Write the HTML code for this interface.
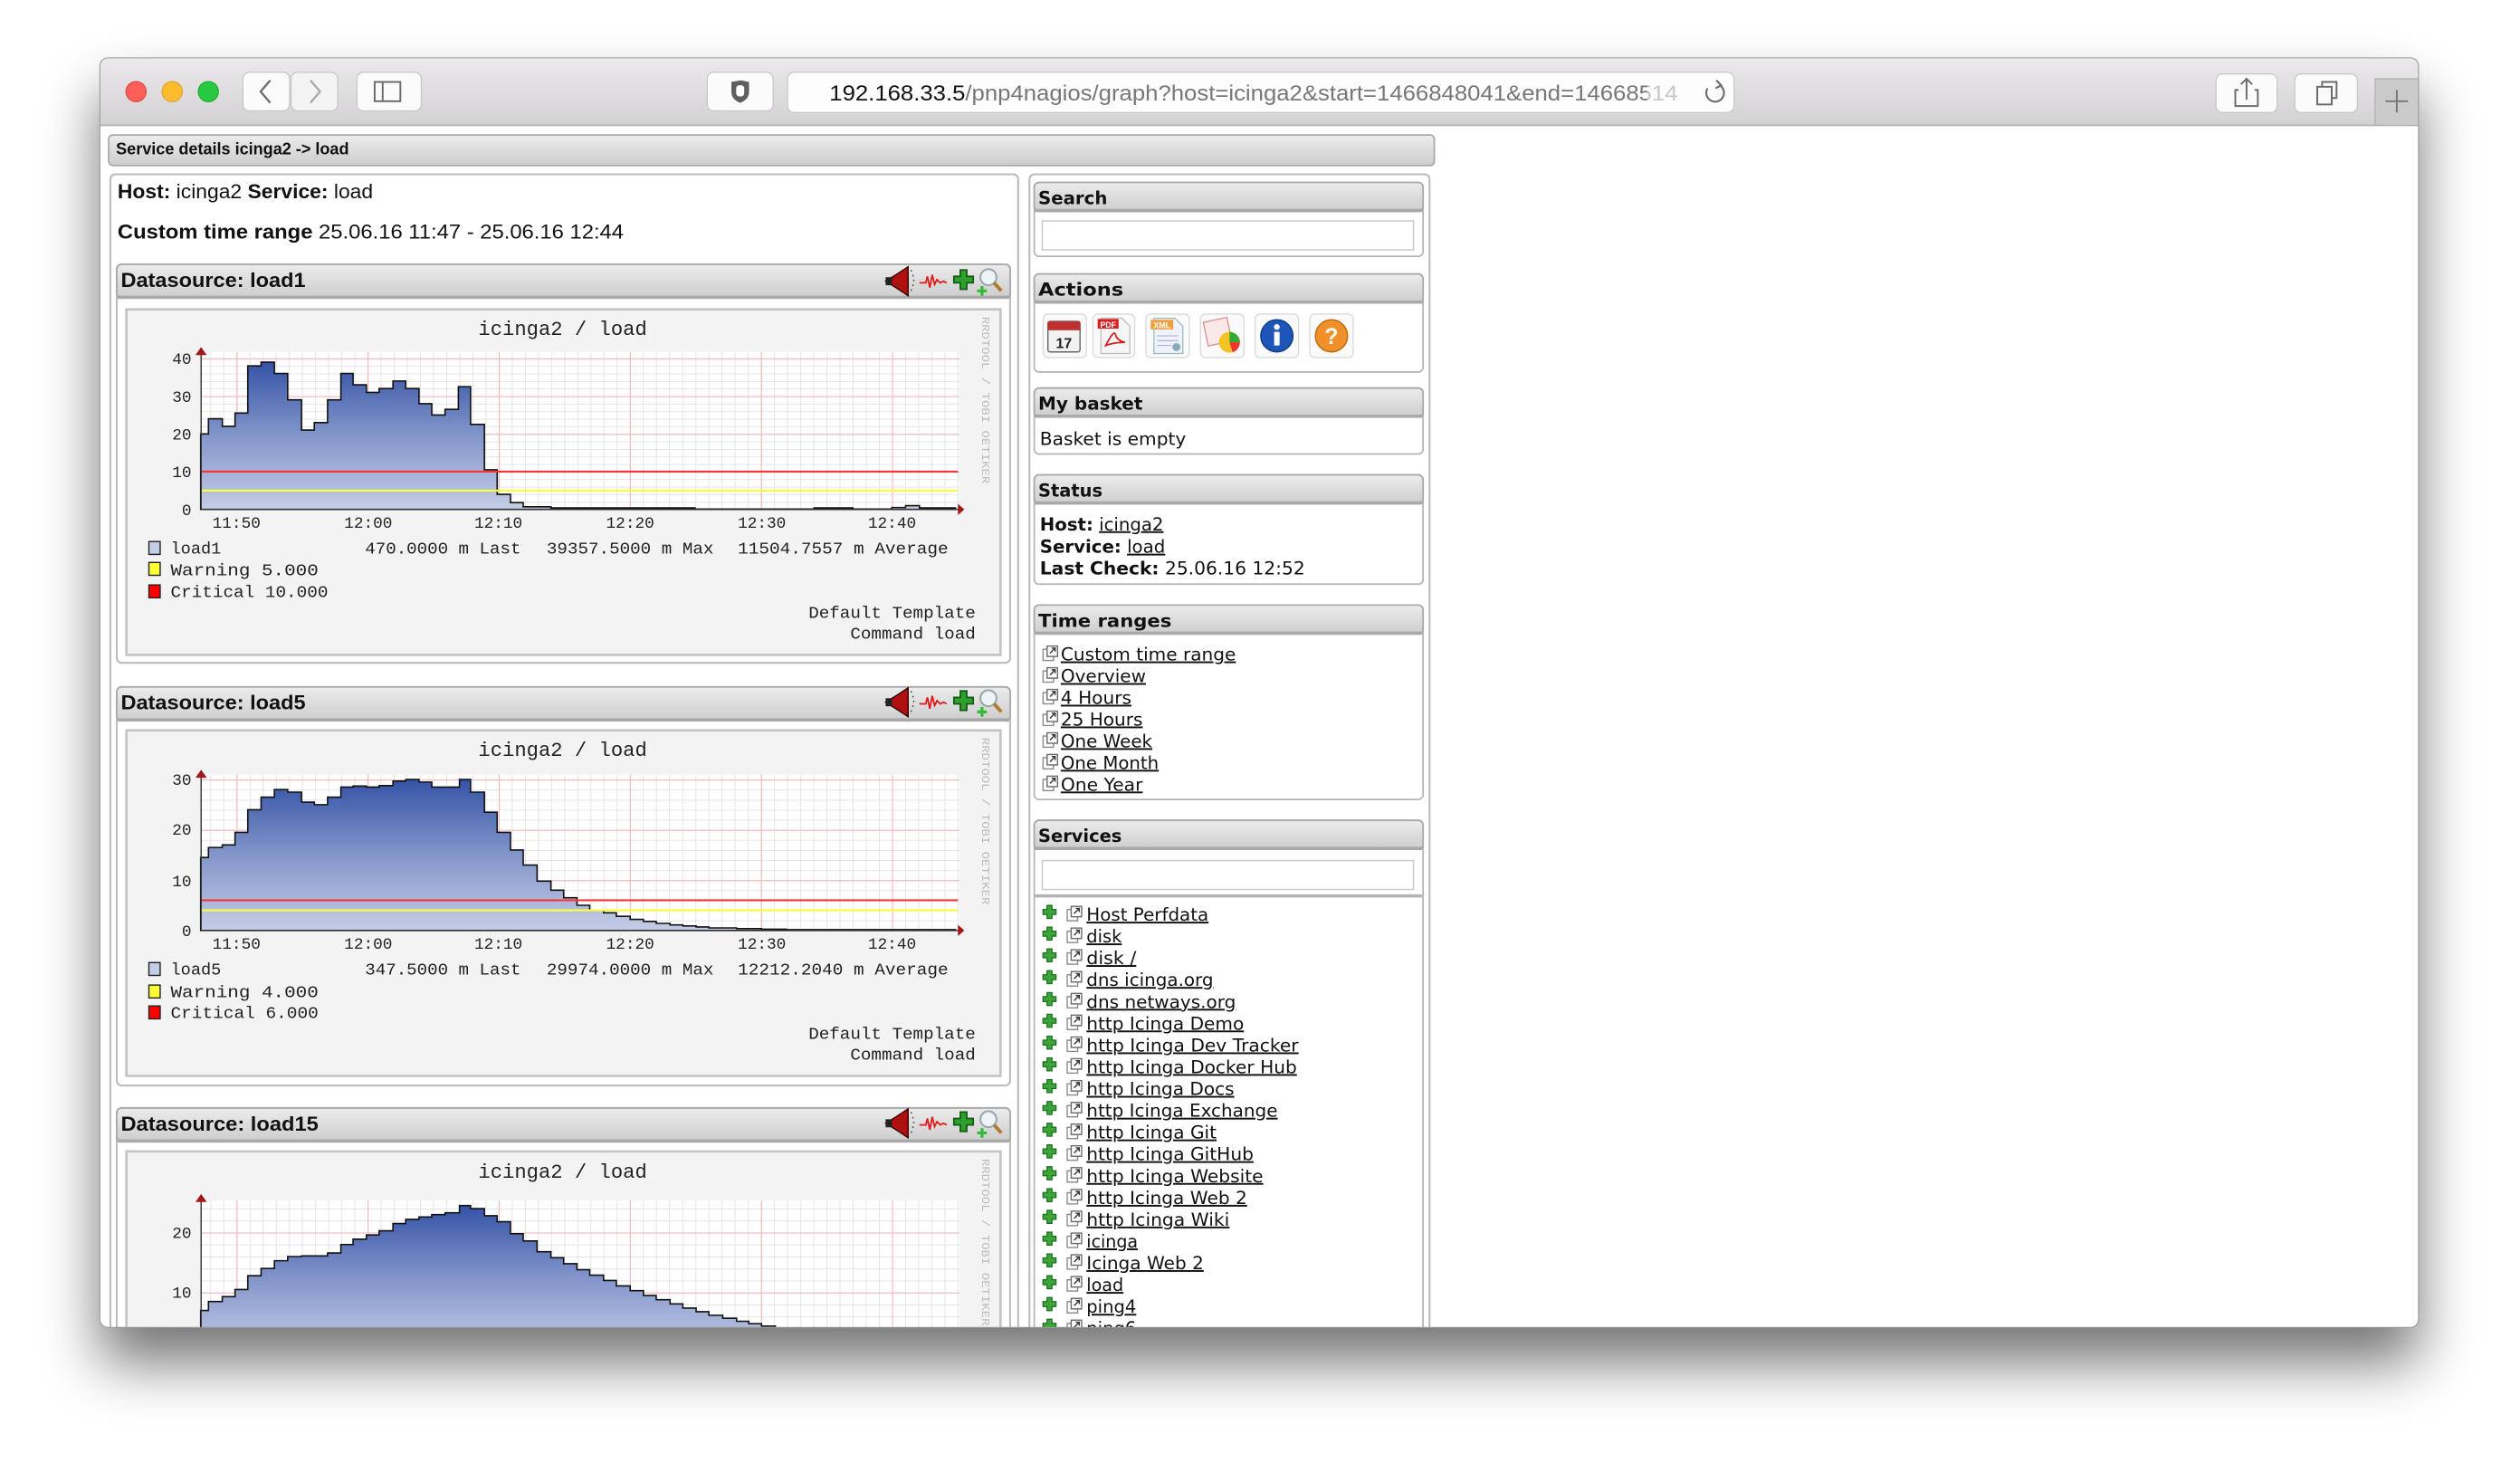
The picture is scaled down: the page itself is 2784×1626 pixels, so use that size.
<!DOCTYPE html>
<html><head><meta charset="utf-8">
<style>
html,body{margin:0;padding:0;background:#fff;width:2784px;height:1626px;overflow:hidden}
svg{display:block}
.ls{font-family:"Liberation Sans",sans-serif}
.dv{font-family:"DejaVu Sans","Liberation Sans",sans-serif}
.mo{font-family:"Liberation Mono","DejaVu Sans Mono",monospace}
</style></head><body>
<svg width="2784" height="1626" viewBox="0 0 1568 916" xmlns="http://www.w3.org/2000/svg">
<defs>
<filter id="sh" x="-10%" y="-10%" width="120%" height="130%">
<feGaussianBlur in="SourceAlpha" stdDeviation="18"/>
<feOffset dy="22"/>
<feComponentTransfer><feFuncA type="linear" slope="0.55"/></feComponentTransfer>
<feMerge><feMergeNode/><feMergeNode in="SourceGraphic"/></feMerge>
</filter>
<linearGradient id="tb" x1="0" y1="0" x2="0" y2="1"><stop offset="0" stop-color="#ebe9eb"/><stop offset="1" stop-color="#d3d1d3"/></linearGradient>
<linearGradient id="hd" x1="0" y1="0" x2="0" y2="1"><stop offset="0" stop-color="#ececec"/><stop offset="1" stop-color="#cdcdcd"/></linearGradient>
<linearGradient id="ar" x1="0" y1="0" x2="0" y2="1"><stop offset="0" stop-color="#c4cde6"/><stop offset="0.5" stop-color="#8396cb"/><stop offset="1" stop-color="#3553a6"/></linearGradient>
<pattern id="vmin" x="147" y="0" width="8.16" height="10" patternUnits="userSpaceOnUse"><rect x="0" y="0" width="0.5" height="10" fill="#e2e2e2"/></pattern>
<pattern id="vmaj" x="147" y="0" width="81.6" height="10" patternUnits="userSpaceOnUse"><rect x="0" y="0" width="0.6" height="10" fill="#f3b4b4"/></pattern>
<pattern id="h1" x="0" y="317" width="10" height="4.7" patternUnits="userSpaceOnUse"><rect x="0" y="0" width="10" height="0.5" fill="#e2e2e2"/></pattern>
<pattern id="h1M" x="0" y="317" width="10" height="23.5" patternUnits="userSpaceOnUse"><rect x="0" y="0" width="10" height="0.6" fill="#f3b4b4"/></pattern>
<pattern id="h2" x="0" y="579" width="10" height="6.26" patternUnits="userSpaceOnUse"><rect x="0" y="0" width="10" height="0.5" fill="#e2e2e2"/></pattern>
<pattern id="h2M" x="0" y="579" width="10" height="31.3" patternUnits="userSpaceOnUse"><rect x="0" y="0" width="10" height="0.6" fill="#f3b4b4"/></pattern>
<pattern id="h3" x="0" y="841.6" width="10" height="7.46" patternUnits="userSpaceOnUse"><rect x="0" y="0" width="10" height="0.5" fill="#e2e2e2"/></pattern>
<pattern id="h3M" x="0" y="841.6" width="10" height="37.3" patternUnits="userSpaceOnUse"><rect x="0" y="0" width="10" height="0.6" fill="#f3b4b4"/></pattern>
<symbol id="ext" viewBox="0 0 10 10"><rect x="0.5" y="2.5" width="6.5" height="7" fill="#fff" stroke="#8a8a8a" stroke-width="0.8"/><rect x="3" y="0.5" width="6.5" height="6.5" fill="#fff" stroke="#6a6a6a" stroke-width="0.8"/><path d="M4.8 5 L8 1.8 M5.8 1.8 H8 V4" stroke="#333" stroke-width="0.8" fill="none"/></symbol>
<symbol id="plus" viewBox="0 0 10 10"><path d="M3.3 0.5 H6.7 V3.3 H9.5 V6.7 H6.7 V9.5 H3.3 V6.7 H0.5 V3.3 H3.3 Z" fill="#3aa63a" stroke="#1f6e1f" stroke-width="0.8"/></symbol>
<symbol id="dsicons" viewBox="0 0 78 20">
<path d="M1 10 L9 5 L15 1 V19 L9 15 Z" fill="#b01010" stroke="#300" stroke-width="0.8"/><rect x="1" y="7.5" width="4" height="5" fill="#222"/><path d="M17 3 v1 M18 6 v1 M18.5 9 v1 M18 12 v1 M17 15 v1" stroke="#444" stroke-width="0.8"/>
<path d="M22 11 L26 11 L27 7 L28.5 14 L30 6 L31.5 12 L33 9 L35 11 L37 10 L39 11" stroke="#e01818" stroke-width="1" fill="none"/>
<path d="M47.5 3 H51.5 V7 H55.5 V11 H51.5 V15 H47.5 V11 H43.5 V7 H47.5 Z" fill="#2da02d" stroke="#145a14" stroke-width="1"/>
<circle cx="65" cy="7.5" r="5" fill="#eef4f8" stroke="#9aa" stroke-width="1.2"/><path d="M68.5 11 L73 16" stroke="#b07a30" stroke-width="2.2"/><path d="M61 13 v6 M58 16 h6" stroke="#3b3" stroke-width="1.8"/>
</symbol>
<clipPath id="win"><rect x="62" y="36" width="1443" height="790" rx="5"/></clipPath>
</defs>

<rect x="62" y="36" width="1443" height="790" rx="5" fill="#fff" filter="url(#sh)"/>
<g clip-path="url(#win)">
<rect x="62" y="36" width="1443" height="790" fill="#fff"/>
<rect x="62" y="36" width="1443" height="42" fill="url(#tb)"/>
<rect x="62" y="77.5" width="1443" height="1" fill="#b3b3b3"/>
<circle cx="84.5" cy="57" r="6.3" fill="#fc5f57" stroke="#e0443e" stroke-width="0.6"/>
<circle cx="107" cy="57" r="6.3" fill="#fdbc2e" stroke="#dea123" stroke-width="0.6"/>
<circle cx="129.5" cy="57" r="6.3" fill="#28c840" stroke="#1aab29" stroke-width="0.6"/>
<rect x="151" y="45" width="29" height="24" rx="4" fill="#fbfbfb" stroke="#c7c7c7" stroke-width="0.7"/>
<rect x="181" y="45" width="29" height="24" rx="4" fill="#f4f4f4" stroke="#c7c7c7" stroke-width="0.7"/>
<path d="M168 50 L162 57 L168 64" stroke="#6b6b6b" stroke-width="1.3" fill="none"/>
<path d="M193 50 L199 57 L193 64" stroke="#a9a9a9" stroke-width="1.3" fill="none"/>
<rect x="222" y="45" width="40" height="24" rx="4" fill="#fbfbfb" stroke="#c7c7c7" stroke-width="0.7"/>
<rect x="233" y="51" width="16" height="12" fill="none" stroke="#6b6b6b" stroke-width="1.1"/><path d="M238 51 V63" stroke="#6b6b6b" stroke-width="1.1"/>
<rect x="440" y="45" width="41" height="24" rx="4" fill="#fbfbfb" stroke="#c7c7c7" stroke-width="0.7"/>
<path d="M455 51 L461 50 L466 51 L466 57 Q466 62 460.5 64 Q455 62 455 57 Z" fill="#5f5f5f"/><rect x="458" y="53" width="5" height="7" rx="2" fill="#fff"/>
<rect x="490" y="45" width="589" height="25" rx="4" fill="#fdfdfd" stroke="#c9c9c9" stroke-width="0.7"/>
<text x="516" y="62.5" class="ls" font-size="13.5" fill="#777" textLength="528" lengthAdjust="spacingAndGlyphs"><tspan fill="#111">192.168.33.5</tspan>/pnp4nagios/graph?host=icinga2&amp;start=1466848041&amp;end=14668514</text>
<rect x="1025" y="48" width="22" height="19" fill="#fdfdfd" opacity="0.6"/>
<path d="M1070 53 A5.5 5.5 0 1 1 1062.5 55" stroke="#6b6b6b" stroke-width="1.2" fill="none"/><path d="M1068 50 L1071 53 L1067.5 55" stroke="#6b6b6b" stroke-width="1.2" fill="none"/>
<rect x="1379" y="46" width="38" height="24" rx="4" fill="#fbfbfb" stroke="#c7c7c7" stroke-width="0.7"/>
<path d="M1393 56 H1391 V66 H1405 V56 H1403 M1398 62 V49 M1394.5 52.5 L1398 49 L1401.5 52.5" stroke="#6b6b6b" stroke-width="1.1" fill="none"/>
<rect x="1428" y="46" width="39" height="24" rx="4" fill="#fbfbfb" stroke="#c7c7c7" stroke-width="0.7"/>
<rect x="1442" y="54" width="9" height="11" fill="none" stroke="#6b6b6b" stroke-width="1.1"/><path d="M1445 54 V51 H1454 V61 H1451" stroke="#6b6b6b" stroke-width="1.1" fill="none"/>
<rect x="1478" y="49" width="28" height="29" fill="#cbcbcb" stroke="#b0b0b0" stroke-width="0.7"/>
<path d="M1491.5 56 V70 M1484.5 63 H1498.5" stroke="#777" stroke-width="1.1"/>

<rect x="67.5" y="84" width="825" height="19" rx="2.5" fill="url(#hd)" stroke="#a9a9a9" stroke-width="1"/>
<text x="72" y="96" class="ls" font-size="10.5" font-weight="bold" fill="#111" textLength="145" lengthAdjust="spacingAndGlyphs">Service details icinga2 -&gt; load</text>

<rect x="68.5" y="108.5" width="565" height="800" rx="3" fill="#fff" stroke="#bdbdbd" stroke-width="1.2"/>
<text x="73" y="123.5" class="ls" font-size="12.5" fill="#111" textLength="159" lengthAdjust="spacingAndGlyphs"><tspan font-weight="bold">Host:</tspan> icinga2 <tspan font-weight="bold">Service:</tspan> load</text>
<text x="73" y="148.5" class="ls" font-size="12.5" fill="#111" textLength="315" lengthAdjust="spacingAndGlyphs"><tspan font-weight="bold">Custom time range</tspan> 25.06.16 11:47 - 25.06.16 12:44</text>

<!-- load1 -->
<rect x="72.5" y="164.5" width="556" height="248" rx="3" fill="#fff" stroke="#bdbdbd" stroke-width="1.2"/>
<rect x="72.5" y="164.5" width="556" height="21" rx="3" fill="url(#hd)" stroke="#a9a9a9" stroke-width="1"/>
<rect x="73" y="184" width="555" height="2" fill="#a9a9a9"/>
<text x="75" y="178.5" class="ls" font-size="12.5" font-weight="bold" fill="#111" textLength="115" lengthAdjust="spacingAndGlyphs">Datasource: load1</text>
<use href="#dsicons" x="550" y="165" width="78" height="20"/>
<rect x="78.5" y="192.5" width="544" height="215" fill="#f3f3f3" stroke="#c4c4c4" stroke-width="1.5"/>
<rect x="125" y="219" width="472" height="98" fill="#fff"/>
<rect x="125" y="219" width="472" height="98" fill="url(#vmin)"/>
<rect x="125" y="219" width="472" height="98" fill="url(#h1)"/>
<rect x="125" y="219" width="472" height="98" fill="url(#vmaj)"/>
<rect x="125" y="219" width="472" height="98" fill="url(#h1M)"/>
<g transform="translate(78.85,317) scale(0.3449,-2.35)">
<path d="M133,0 V20 H147 V24 H172 V22 H195 V25.5 H218 V38 H242 V39 H266 V36 H290 V29 H315 V21 H338 V23 H362 V29 H386 V36 H408 V33 H432 V31 H455 V32 H480 V34 H503 V32 H527 V28 H550 V25 H574 V26.5 H598 V32.5 H620 V22.5 H645 V10.5 H668 V4 H692 V1.8 H715 V0.7 H765 V0.4 H1025 V0.1 H1240 V0.4 H1310 V0.1 H1380 V0.5 H1405 V1 H1430 V0.4 H1495 V0 Z" fill="url(#ar)" stroke="#111" stroke-width="1.6" vector-effect="non-scaling-stroke"/>
</g>
<path d="M125 293.5 H596" stroke="#f33" stroke-width="1.2"/>
<path d="M125 305.3 H596" stroke="#ff3" stroke-width="1.2"/>
<path d="M125 317 H597 M125 317 V219" stroke="#333" stroke-width="0.8"/>
<path d="M596 313.5 L600 317 L596 320.5 Z M121.5 221 L125 216 L128.5 221 Z" fill="#a01818"/>
<g class="mo" font-size="10" fill="#222" text-anchor="end">
<text x="119" y="226.5">40</text><text x="119" y="250">30</text><text x="119" y="273.5">20</text><text x="119" y="297">10</text><text x="119" y="320.5">0</text>
</g>
<g class="mo" font-size="10" fill="#222" text-anchor="middle">
<text x="147" y="328.5">11:50</text><text x="229" y="328.5">12:00</text><text x="310" y="328.5">12:10</text><text x="392" y="328.5">12:20</text><text x="474" y="328.5">12:30</text><text x="555" y="328.5">12:40</text>
</g>
<text x="350" y="208.5" class="mo" font-size="12.5" fill="#222" text-anchor="middle" textLength="105" lengthAdjust="spacingAndGlyphs">icinga2 / load</text>
<text transform="translate(611,197) rotate(90)" class="mo" font-size="7" fill="#bbb" textLength="104" lengthAdjust="spacingAndGlyphs">RRDTOOL / TOBI OETIKER</text>
<rect x="92.5" y="337" width="7" height="8" fill="#c4cde6" stroke="#222" stroke-width="0.8"/>
<rect x="92.5" y="350" width="7" height="8" fill="#ff3" stroke="#222" stroke-width="0.8"/>
<rect x="92.5" y="364" width="7" height="8" fill="#f00" stroke="#222" stroke-width="0.8"/>
<g class="mo" font-size="10.5" fill="#222">
<text x="106" y="344.5">load1</text>
<text x="227" y="344.5" textLength="97" lengthAdjust="spacingAndGlyphs">470.0000 m Last</text>
<text x="340" y="344.5" textLength="104" lengthAdjust="spacingAndGlyphs">39357.5000 m Max</text>
<text x="459" y="344.5" textLength="131" lengthAdjust="spacingAndGlyphs">11504.7557 m Average</text>
<text x="106" y="358" textLength="92" lengthAdjust="spacingAndGlyphs">Warning  5.000</text>
<text x="106" y="371.5" textLength="98" lengthAdjust="spacingAndGlyphs">Critical 10.000</text>
<text x="607" y="384.5" text-anchor="end" textLength="104" lengthAdjust="spacingAndGlyphs">Default Template</text>
<text x="607" y="397.5" text-anchor="end" textLength="78" lengthAdjust="spacingAndGlyphs">Command load</text>
</g>

<!-- load5 -->
<rect x="72.5" y="427.5" width="556" height="248" rx="3" fill="#fff" stroke="#bdbdbd" stroke-width="1.2"/>
<rect x="72.5" y="427.5" width="556" height="21" rx="3" fill="url(#hd)" stroke="#a9a9a9" stroke-width="1"/>
<rect x="73" y="447" width="555" height="2" fill="#a9a9a9"/>
<text x="75" y="441.5" class="ls" font-size="12.5" font-weight="bold" fill="#111" textLength="115" lengthAdjust="spacingAndGlyphs">Datasource: load5</text>
<use href="#dsicons" x="550" y="427" width="78" height="20"/>
<rect x="78.5" y="454.5" width="544" height="215" fill="#f3f3f3" stroke="#c4c4c4" stroke-width="1.5"/>
<rect x="125" y="482" width="472" height="97" fill="#fff"/>
<rect x="125" y="482" width="472" height="97" fill="url(#vmin)"/>
<rect x="125" y="482" width="472" height="97" fill="url(#h2)"/>
<rect x="125" y="482" width="472" height="97" fill="url(#vmaj)"/>
<rect x="125" y="482" width="472" height="97" fill="url(#h2M)"/>
<g transform="translate(78.85,579) scale(0.3449,-3.13)">
<path d="M133,0 V14.5 H147 V16.5 H172 V17 H195 V19.5 H218 V24 H242 V26.5 H266 V28 H290 V27.5 H315 V25.5 H338 V25 H362 V26.5 H386 V28.5 H408 V28.7 H432 V28.5 H455 V28.8 H480 V29.7 H503 V30 H527 V29.5 H550 V28.5 H600 V30 H620 V27.5 H645 V23.5 H668 V19.5 H692 V16 H715 V13 H740 V9.8 H765 V8 H788 V6.5 H812 V5 H835 V4 H860 V3.5 H883 V2.8 H908 V2.2 H932 V1.8 H955 V1.4 H980 V1.1 H1003 V0.9 H1027 V0.7 H1050 V0.5 H1100 V0.35 H1145 V0.25 H1190 V0.15 H1495 V0 Z" fill="url(#ar)" stroke="#111" stroke-width="1.6" vector-effect="non-scaling-stroke"/>
</g>
<path d="M125 560.2 H596" stroke="#f33" stroke-width="1.2"/>
<path d="M125 566.5 H596" stroke="#ff3" stroke-width="1.2"/>
<path d="M125 579 H597 M125 579 V482" stroke="#333" stroke-width="0.8"/>
<path d="M596 575.5 L600 579 L596 582.5 Z M121.5 484 L125 479 L128.5 484 Z" fill="#a01818"/>
<g class="mo" font-size="10" fill="#222" text-anchor="end">
<text x="119" y="488.5">30</text><text x="119" y="519.5">20</text><text x="119" y="551.5">10</text><text x="119" y="582.5">0</text>
</g>
<g class="mo" font-size="10" fill="#222" text-anchor="middle">
<text x="147" y="590.5">11:50</text><text x="229" y="590.5">12:00</text><text x="310" y="590.5">12:10</text><text x="392" y="590.5">12:20</text><text x="474" y="590.5">12:30</text><text x="555" y="590.5">12:40</text>
</g>
<text x="350" y="470.5" class="mo" font-size="12.5" fill="#222" text-anchor="middle" textLength="105" lengthAdjust="spacingAndGlyphs">icinga2 / load</text>
<text transform="translate(611,459) rotate(90)" class="mo" font-size="7" fill="#bbb" textLength="104" lengthAdjust="spacingAndGlyphs">RRDTOOL / TOBI OETIKER</text>
<rect x="92.5" y="599" width="7" height="8" fill="#c4cde6" stroke="#222" stroke-width="0.8"/>
<rect x="92.5" y="613" width="7" height="8" fill="#ff3" stroke="#222" stroke-width="0.8"/>
<rect x="92.5" y="626" width="7" height="8" fill="#f00" stroke="#222" stroke-width="0.8"/>
<g class="mo" font-size="10.5" fill="#222">
<text x="106" y="606.5">load5</text>
<text x="227" y="606.5" textLength="97" lengthAdjust="spacingAndGlyphs">347.5000 m Last</text>
<text x="340" y="606.5" textLength="104" lengthAdjust="spacingAndGlyphs">29974.0000 m Max</text>
<text x="459" y="606.5" textLength="131" lengthAdjust="spacingAndGlyphs">12212.2040 m Average</text>
<text x="106" y="620.5" textLength="92" lengthAdjust="spacingAndGlyphs">Warning  4.000</text>
<text x="106" y="633.5" textLength="92" lengthAdjust="spacingAndGlyphs">Critical 6.000</text>
<text x="607" y="646.5" text-anchor="end" textLength="104" lengthAdjust="spacingAndGlyphs">Default Template</text>
<text x="607" y="659.5" text-anchor="end" textLength="78" lengthAdjust="spacingAndGlyphs">Command load</text>
</g>

<!-- load15 -->
<rect x="72.5" y="689.5" width="556" height="248" rx="3" fill="#fff" stroke="#bdbdbd" stroke-width="1.2"/>
<rect x="72.5" y="689.5" width="556" height="21" rx="3" fill="url(#hd)" stroke="#a9a9a9" stroke-width="1"/>
<rect x="73" y="709" width="555" height="2" fill="#a9a9a9"/>
<text x="75" y="703.5" class="ls" font-size="12.5" font-weight="bold" fill="#111" textLength="123" lengthAdjust="spacingAndGlyphs">Datasource: load15</text>
<use href="#dsicons" x="550" y="689" width="78" height="20"/>
<rect x="78.5" y="716.5" width="544" height="215" fill="#f3f3f3" stroke="#c4c4c4" stroke-width="1.5"/>
<rect x="125" y="747" width="472" height="95" fill="#fff"/>
<rect x="125" y="747" width="472" height="95" fill="url(#vmin)"/>
<rect x="125" y="747" width="472" height="95" fill="url(#h3)"/>
<rect x="125" y="747" width="472" height="95" fill="url(#vmaj)"/>
<rect x="125" y="747" width="472" height="95" fill="url(#h3M)"/>
<g transform="translate(78.85,841.6) scale(0.3449,-3.73)">
<path d="M133,0 V7 H147 V8.5 H172 V9.3 H195 V10.5 H218 V12.8 H242 V14 H266 V15.3 H290 V16 H315 V16.1 H362 V16.6 H386 V18 H408 V18.9 H432 V19.6 H455 V20.3 H480 V21.5 H503 V22.2 H527 V22.6 H550 V23 H574 V23.3 H600 V24.5 H620 V24 H645 V22.8 H668 V21.8 H692 V19.8 H715 V18.6 H740 V16.8 H765 V15.8 H788 V14.8 H812 V13.8 H835 V12.9 H860 V12 H883 V11.1 H908 V10.3 H932 V9.5 H955 V8.8 H980 V8.1 H1003 V7.4 H1027 V6.8 H1050 V6.2 H1075 V5.7 H1100 V5.2 H1122 V4.8 H1145 V4.4 H1170 V4.1 H1195 V3.7 H1220 V3.4 H1245 V3.1 H1270 V2.8 H1295 V2.5 H1320 V2.2 H1345 V1.9 H1370 V1.7 H1395 V1.5 H1420 V1.3 H1445 V1.1 H1470 V1 H1495 V0 Z" fill="url(#ar)" stroke="#111" stroke-width="1.6" vector-effect="non-scaling-stroke"/>
</g>
<path d="M125 842 V747" stroke="#333" stroke-width="0.8"/>
<path d="M121.5 748 L125 743 L128.5 748 Z" fill="#a01818"/>
<g class="mo" font-size="10" fill="#222" text-anchor="end">
<text x="119" y="770.5">20</text><text x="119" y="807.5">10</text>
</g>
<text x="350" y="733" class="mo" font-size="12.5" fill="#222" text-anchor="middle" textLength="105" lengthAdjust="spacingAndGlyphs">icinga2 / load</text>
<text transform="translate(611,721) rotate(90)" class="mo" font-size="7" fill="#bbb" textLength="104" lengthAdjust="spacingAndGlyphs">RRDTOOL / TOBI OETIKER</text>

<!-- right column -->
<rect x="640.5" y="108.5" width="249" height="800" rx="3" fill="#fff" stroke="#bdbdbd" stroke-width="1.2"/>

<rect x="643.5" y="113.5" width="242" height="46" rx="3" fill="#fff" stroke="#b5b5b5" stroke-width="1"/>
<rect x="643.5" y="113.5" width="242" height="18" rx="3" fill="url(#hd)" stroke="#a9a9a9" stroke-width="1"/>
<rect x="644" y="130" width="241" height="2" fill="#a9a9a9"/>
<text x="646" y="127" class="dv" font-size="11" font-weight="bold" fill="#111" textLength="43" lengthAdjust="spacingAndGlyphs">Search</text>
<rect x="648.5" y="137.5" width="231" height="18" fill="#fff" stroke="#c8c8c8" stroke-width="0.8"/>

<rect x="643.5" y="170.5" width="242" height="61" rx="3" fill="#fff" stroke="#b5b5b5" stroke-width="1"/>
<rect x="643.5" y="170.5" width="242" height="18" rx="3" fill="url(#hd)" stroke="#a9a9a9" stroke-width="1"/>
<rect x="644" y="187" width="241" height="2" fill="#a9a9a9"/>
<text x="646" y="184" class="dv" font-size="11" font-weight="bold" fill="#111" textLength="53" lengthAdjust="spacingAndGlyphs">Actions</text>
<g stroke="#d8d8d8" stroke-width="0.7" fill="#fafafa">
<rect x="649" y="195.5" width="27" height="27" rx="3"/><rect x="680" y="195.5" width="26" height="27" rx="3"/><rect x="713" y="195.5" width="27" height="27" rx="3"/><rect x="747" y="195.5" width="27" height="27" rx="3"/><rect x="781" y="195.5" width="27" height="27" rx="3"/><rect x="815" y="195.5" width="27" height="27" rx="3"/>
</g>
<rect x="652" y="200" width="20" height="19" rx="1.5" fill="#f2f2f2" stroke="#666" stroke-width="0.8"/>
<rect x="652" y="200" width="20" height="5.5" fill="#c03030"/>
<text x="662" y="216.5" class="ls" font-size="9" font-weight="bold" fill="#222" text-anchor="middle">17</text>
<path d="M685 198 H698 L703 203 V220 H685 Z" fill="#f6f6f6" stroke="#bbb" stroke-width="0.7"/>
<rect x="683" y="198.5" width="13" height="6" fill="#d42020"/>
<text x="689.5" y="203.8" class="ls" font-size="5" font-weight="bold" fill="#fff" text-anchor="middle">PDF</text>
<path d="M688 215 Q693 205 694 208 Q695 212 700 213 Q693 213 688 215 Z" fill="none" stroke="#d42020" stroke-width="1"/>
<path d="M718 198 H731 L736 203 V220 H718 Z" fill="#eef3fb" stroke="#9bb" stroke-width="0.7"/>
<rect x="716" y="199" width="14" height="6" fill="#f0a040"/>
<text x="723" y="204.3" class="ls" font-size="5" font-weight="bold" fill="#fff" text-anchor="middle">XML</text>
<path d="M720 209 H733 M720 212 H733 M720 215 H729" stroke="#aac" stroke-width="0.6"/><circle cx="732" cy="216" r="2.5" fill="#8ab"/>
<rect x="750" y="199" width="15" height="15" fill="#fbe8e8" stroke="#d88" stroke-width="0.7" transform="rotate(-12 757 206)"/>
<circle cx="765" cy="213" r="6.5" fill="#f3c321"/>
<path d="M765 213 L765 206.5 A6.5 6.5 0 0 1 771.5 213 Z" fill="#3a3"/><path d="M765 213 L771.5 213 A6.5 6.5 0 0 1 767 219.2 Z" fill="#e33"/>
<circle cx="794.5" cy="209" r="10" fill="#1e55b8" stroke="#0c3a8a" stroke-width="0.8"/>
<circle cx="794.5" cy="203.5" r="1.8" fill="#fff"/><rect x="792.8" y="206.5" width="3.4" height="8.5" fill="#fff"/>
<circle cx="828.5" cy="209" r="10" fill="#f0902a" stroke="#c06a10" stroke-width="0.8"/>
<text x="828.5" y="214" class="ls" font-size="14" font-weight="bold" fill="#fff" text-anchor="middle">?</text>

<rect x="643.5" y="241.5" width="242" height="41" rx="3" fill="#fff" stroke="#b5b5b5" stroke-width="1"/>
<rect x="643.5" y="241.5" width="242" height="18" rx="3" fill="url(#hd)" stroke="#a9a9a9" stroke-width="1"/>
<rect x="644" y="258" width="241" height="2" fill="#a9a9a9"/>
<text x="646" y="255" class="dv" font-size="11" font-weight="bold" fill="#111" textLength="65" lengthAdjust="spacingAndGlyphs">My basket</text>
<text x="647" y="277" class="dv" font-size="11" fill="#111" textLength="91" lengthAdjust="spacingAndGlyphs">Basket is empty</text>

<rect x="643.5" y="295.5" width="242" height="68" rx="3" fill="#fff" stroke="#b5b5b5" stroke-width="1"/>
<rect x="643.5" y="295.5" width="242" height="18" rx="3" fill="url(#hd)" stroke="#a9a9a9" stroke-width="1"/>
<rect x="644" y="312" width="241" height="2" fill="#a9a9a9"/>
<text x="646" y="309" class="dv" font-size="11" font-weight="bold" fill="#111" textLength="40" lengthAdjust="spacingAndGlyphs">Status</text>
<g class="dv" font-size="11" fill="#111">
<text x="647" y="330" textLength="77" lengthAdjust="spacingAndGlyphs"><tspan font-weight="bold">Host:</tspan> <tspan text-decoration="underline">icinga2</tspan></text>
<text x="647" y="344" textLength="78" lengthAdjust="spacingAndGlyphs"><tspan font-weight="bold">Service:</tspan> <tspan text-decoration="underline">load</tspan></text>
<text x="647" y="357.5" textLength="165" lengthAdjust="spacingAndGlyphs"><tspan font-weight="bold">Last Check:</tspan> 25.06.16 12:52</text>
</g>

<rect x="643.5" y="376.5" width="242" height="121" rx="3" fill="#fff" stroke="#b5b5b5" stroke-width="1"/>
<rect x="643.5" y="376.5" width="242" height="18" rx="3" fill="url(#hd)" stroke="#a9a9a9" stroke-width="1"/>
<rect x="644" y="393" width="241" height="2" fill="#a9a9a9"/>
<text x="646" y="390" class="dv" font-size="11" font-weight="bold" fill="#111" textLength="83" lengthAdjust="spacingAndGlyphs">Time ranges</text>
<g class="dv" font-size="11" fill="#111" text-decoration="underline">
<text x="660" y="411" textLength="109" lengthAdjust="spacingAndGlyphs">Custom time range</text>
<text x="660" y="424.5" textLength="53" lengthAdjust="spacingAndGlyphs">Overview</text>
<text x="660" y="438" textLength="44" lengthAdjust="spacingAndGlyphs">4 Hours</text>
<text x="660" y="451.5" textLength="51" lengthAdjust="spacingAndGlyphs">25 Hours</text>
<text x="660" y="465" textLength="57" lengthAdjust="spacingAndGlyphs">One Week</text>
<text x="660" y="478.5" textLength="61" lengthAdjust="spacingAndGlyphs">One Month</text>
<text x="660" y="492" textLength="51" lengthAdjust="spacingAndGlyphs">One Year</text>
</g>
<use href="#ext" x="648.5" y="401.5" width="10" height="10"/>
<use href="#ext" x="648.5" y="415" width="10" height="10"/>
<use href="#ext" x="648.5" y="428.5" width="10" height="10"/>
<use href="#ext" x="648.5" y="442" width="10" height="10"/>
<use href="#ext" x="648.5" y="455.5" width="10" height="10"/>
<use href="#ext" x="648.5" y="469" width="10" height="10"/>
<use href="#ext" x="648.5" y="482.5" width="10" height="10"/>

<rect x="643.5" y="510.5" width="242" height="400" rx="3" fill="#fff" stroke="#b5b5b5" stroke-width="1"/>
<rect x="643.5" y="510.5" width="242" height="18" rx="3" fill="url(#hd)" stroke="#a9a9a9" stroke-width="1"/>
<rect x="644" y="527" width="241" height="2" fill="#a9a9a9"/>
<text x="646" y="524" class="dv" font-size="11" font-weight="bold" fill="#111" textLength="52" lengthAdjust="spacingAndGlyphs">Services</text>
<rect x="648.5" y="535.5" width="231" height="18" fill="#fff" stroke="#c8c8c8" stroke-width="0.8"/>
<rect x="644" y="556.5" width="241" height="2" fill="#b5b5b5"/>
<g class="dv" font-size="11" fill="#111" text-decoration="underline">
<text x="676" y="573" textLength="76" lengthAdjust="spacingAndGlyphs">Host Perfdata</text>
<text x="676" y="586.5" textLength="22" lengthAdjust="spacingAndGlyphs">disk</text>
<text x="676" y="600" textLength="31" lengthAdjust="spacingAndGlyphs">disk /</text>
<text x="676" y="613.6" textLength="79" lengthAdjust="spacingAndGlyphs">dns icinga.org</text>
<text x="676" y="627.2" textLength="93" lengthAdjust="spacingAndGlyphs">dns netways.org</text>
<text x="676" y="640.7" textLength="98" lengthAdjust="spacingAndGlyphs">http Icinga Demo</text>
<text x="676" y="654.3" textLength="132" lengthAdjust="spacingAndGlyphs">http Icinga Dev Tracker</text>
<text x="676" y="667.8" textLength="131" lengthAdjust="spacingAndGlyphs">http Icinga Docker Hub</text>
<text x="676" y="681.4" textLength="92" lengthAdjust="spacingAndGlyphs">http Icinga Docs</text>
<text x="676" y="695" textLength="119" lengthAdjust="spacingAndGlyphs">http Icinga Exchange</text>
<text x="676" y="708.5" textLength="81" lengthAdjust="spacingAndGlyphs">http Icinga Git</text>
<text x="676" y="722" textLength="104" lengthAdjust="spacingAndGlyphs">http Icinga GitHub</text>
<text x="676" y="735.6" textLength="110" lengthAdjust="spacingAndGlyphs">http Icinga Website</text>
<text x="676" y="749.2" textLength="100" lengthAdjust="spacingAndGlyphs">http Icinga Web 2</text>
<text x="676" y="762.7" textLength="89" lengthAdjust="spacingAndGlyphs">http Icinga Wiki</text>
<text x="676" y="776.3" textLength="32" lengthAdjust="spacingAndGlyphs">icinga</text>
<text x="676" y="789.8" textLength="73" lengthAdjust="spacingAndGlyphs">Icinga Web 2</text>
<text x="676" y="803.4" textLength="23" lengthAdjust="spacingAndGlyphs">load</text>
<text x="676" y="817" textLength="31" lengthAdjust="spacingAndGlyphs">ping4</text>
<text x="676" y="830.5" textLength="31" lengthAdjust="spacingAndGlyphs">ping6</text>
</g>
<g>
<use href="#plus" x="648.5" y="563" width="9" height="9"/><use href="#ext" x="663.5" y="563.5" width="10" height="10"/>
<use href="#plus" x="648.5" y="576.5" width="9" height="9"/><use href="#ext" x="663.5" y="577" width="10" height="10"/>
<use href="#plus" x="648.5" y="590" width="9" height="9"/><use href="#ext" x="663.5" y="590.5" width="10" height="10"/>
<use href="#plus" x="648.5" y="603.6" width="9" height="9"/><use href="#ext" x="663.5" y="604.1" width="10" height="10"/>
<use href="#plus" x="648.5" y="617.2" width="9" height="9"/><use href="#ext" x="663.5" y="617.7" width="10" height="10"/>
<use href="#plus" x="648.5" y="630.7" width="9" height="9"/><use href="#ext" x="663.5" y="631.2" width="10" height="10"/>
<use href="#plus" x="648.5" y="644.3" width="9" height="9"/><use href="#ext" x="663.5" y="644.8" width="10" height="10"/>
<use href="#plus" x="648.5" y="657.8" width="9" height="9"/><use href="#ext" x="663.5" y="658.3" width="10" height="10"/>
<use href="#plus" x="648.5" y="671.4" width="9" height="9"/><use href="#ext" x="663.5" y="671.9" width="10" height="10"/>
<use href="#plus" x="648.5" y="685" width="9" height="9"/><use href="#ext" x="663.5" y="685.5" width="10" height="10"/>
<use href="#plus" x="648.5" y="698.5" width="9" height="9"/><use href="#ext" x="663.5" y="699" width="10" height="10"/>
<use href="#plus" x="648.5" y="712" width="9" height="9"/><use href="#ext" x="663.5" y="712.5" width="10" height="10"/>
<use href="#plus" x="648.5" y="725.6" width="9" height="9"/><use href="#ext" x="663.5" y="726.1" width="10" height="10"/>
<use href="#plus" x="648.5" y="739.2" width="9" height="9"/><use href="#ext" x="663.5" y="739.7" width="10" height="10"/>
<use href="#plus" x="648.5" y="752.7" width="9" height="9"/><use href="#ext" x="663.5" y="753.2" width="10" height="10"/>
<use href="#plus" x="648.5" y="766.3" width="9" height="9"/><use href="#ext" x="663.5" y="766.8" width="10" height="10"/>
<use href="#plus" x="648.5" y="779.8" width="9" height="9"/><use href="#ext" x="663.5" y="780.3" width="10" height="10"/>
<use href="#plus" x="648.5" y="793.4" width="9" height="9"/><use href="#ext" x="663.5" y="793.9" width="10" height="10"/>
<use href="#plus" x="648.5" y="807" width="9" height="9"/><use href="#ext" x="663.5" y="807.5" width="10" height="10"/>
<use href="#plus" x="648.5" y="820.5" width="9" height="9"/><use href="#ext" x="663.5" y="821" width="10" height="10"/>
</g>
</g>
<rect x="62" y="36" width="1443" height="790" rx="5" fill="none" stroke="#9a9a9a" stroke-width="0.6"/>
</svg>
</body></html>
